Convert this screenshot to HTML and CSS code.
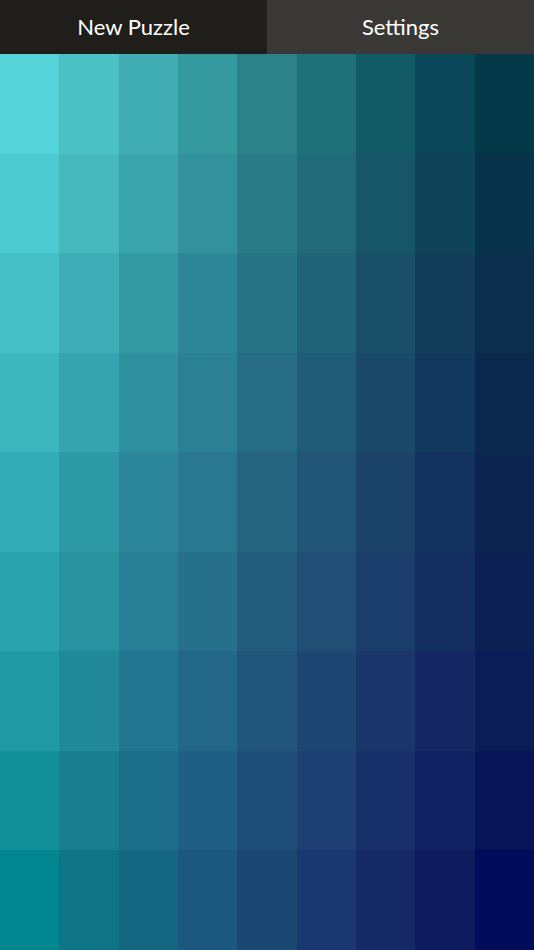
FILE: index.html
```html
<!DOCTYPE html>
<html>
<head>
<meta charset="utf-8">
<link rel="stylesheet" href="styles.css">
</head>
<body>
<div class="app">
  <div class="tabs">
    <div class="tab tab-new">New Puzzle</div>
    <div class="tab tab-settings">Settings</div>
  </div>
  <div class="grid">
    <div class="cell" style="background:rgb(85,212,218)"></div>
    <div class="cell" style="background:rgb(75,192,197)"></div>
    <div class="cell" style="background:rgb(64,173,179)"></div>
    <div class="cell" style="background:rgb(53,154,158)"></div>
    <div class="cell" style="background:rgb(43,130,137)"></div>
    <div class="cell" style="background:rgb(31,112,121)"></div>
    <div class="cell" style="background:rgb(19,90,103)"></div>
    <div class="cell" style="background:rgb(9,70,87)"></div>
    <div class="cell" style="background:rgb(3,56,72)"></div>

    <div class="cell" style="background:rgb(77,202,208)"></div>
    <div class="cell" style="background:rgb(69,183,189)"></div>
    <div class="cell" style="background:rgb(58,164,171)"></div>
    <div class="cell" style="background:rgb(50,145,155)"></div>
    <div class="cell" style="background:rgb(41,123,135)"></div>
    <div class="cell" style="background:rgb(32,106,121)"></div>
    <div class="cell" style="background:rgb(23,85,104)"></div>
    <div class="cell" style="background:rgb(14,66,89)"></div>
    <div class="cell" style="background:rgb(7,51,74)"></div>

    <div class="cell" style="background:rgb(69,192,198)"></div>
    <div class="cell" style="background:rgb(62,173,181)"></div>
    <div class="cell" style="background:rgb(51,154,162)"></div>
    <div class="cell" style="background:rgb(46,135,151)"></div>
    <div class="cell" style="background:rgb(39,116,132)"></div>
    <div class="cell" style="background:rgb(33,99,121)"></div>
    <div class="cell" style="background:rgb(26,79,105)"></div>
    <div class="cell" style="background:rgb(18,61,91)"></div>
    <div class="cell" style="background:rgb(10,46,76)"></div>

    <div class="cell" style="background:rgb(60,183,190)"></div>
    <div class="cell" style="background:rgb(54,164,174)"></div>
    <div class="cell" style="background:rgb(47,145,158)"></div>
    <div class="cell" style="background:rgb(44,128,147)"></div>
    <div class="cell" style="background:rgb(38,108,130)"></div>
    <div class="cell" style="background:rgb(33,92,119)"></div>
    <div class="cell" style="background:rgb(27,73,106)"></div>
    <div class="cell" style="background:rgb(19,56,93)"></div>
    <div class="cell" style="background:rgb(11,41,78)"></div>

    <div class="cell" style="background:rgb(51,173,181)"></div>
    <div class="cell" style="background:rgb(45,154,166)"></div>
    <div class="cell" style="background:rgb(43,135,153)"></div>
    <div class="cell" style="background:rgb(42,120,143)"></div>
    <div class="cell" style="background:rgb(37,99,127)"></div>
    <div class="cell" style="background:rgb(33,85,117)"></div>
    <div class="cell" style="background:rgb(27,67,106)"></div>
    <div class="cell" style="background:rgb(20,50,95)"></div>
    <div class="cell" style="background:rgb(12,36,80)"></div>

    <div class="cell" style="background:rgb(41,164,173)"></div>
    <div class="cell" style="background:rgb(40,146,159)"></div>
    <div class="cell" style="background:rgb(39,127,149)"></div>
    <div class="cell" style="background:rgb(38,112,139)"></div>
    <div class="cell" style="background:rgb(35,92,125)"></div>
    <div class="cell" style="background:rgb(32,78,116)"></div>
    <div class="cell" style="background:rgb(27,61,107)"></div>
    <div class="cell" style="background:rgb(20,45,97)"></div>
    <div class="cell" style="background:rgb(12,32,83)"></div>

    <div class="cell" style="background:rgb(31,154,165)"></div>
    <div class="cell" style="background:rgb(34,137,152)"></div>
    <div class="cell" style="background:rgb(35,118,145)"></div>
    <div class="cell" style="background:rgb(34,103,135)"></div>
    <div class="cell" style="background:rgb(33,85,122)"></div>
    <div class="cell" style="background:rgb(30,70,115)"></div>
    <div class="cell" style="background:rgb(26,54,107)"></div>
    <div class="cell" style="background:rgb(20,39,98)"></div>
    <div class="cell" style="background:rgb(12,28,86)"></div>

    <div class="cell" style="background:rgb(17,144,154)"></div>
    <div class="cell" style="background:rgb(25,127,143)"></div>
    <div class="cell" style="background:rgb(28,110,137)"></div>
    <div class="cell" style="background:rgb(31,95,132)"></div>
    <div class="cell" style="background:rgb(30,78,119)"></div>
    <div class="cell" style="background:rgb(29,63,115)"></div>
    <div class="cell" style="background:rgb(24,48,105)"></div>
    <div class="cell" style="background:rgb(18,33,97)"></div>
    <div class="cell" style="background:rgb(7,20,88)"></div>

    <div class="cell" style="background:rgb(2,134,143)"></div>
    <div class="cell" style="background:rgb(15,117,134)"></div>
    <div class="cell" style="background:rgb(21,102,128)"></div>
    <div class="cell" style="background:rgb(28,87,128)"></div>
    <div class="cell" style="background:rgb(27,71,115)"></div>
    <div class="cell" style="background:rgb(27,55,114)"></div>
    <div class="cell" style="background:rgb(21,41,102)"></div>
    <div class="cell" style="background:rgb(15,27,95)"></div>
    <div class="cell" style="background:rgb(2,12,90)"></div>
  </div>
</div>
</body>
</html>
```
FILE: styles.css
```css
html, body { margin: 0; padding: 0; }
body { width: 534px; height: 950px; overflow: hidden; background: #000; }
.app { display: flex; flex-direction: column; height: 950px; }
.tabs { display: flex; height: 54px; flex: none; }
.tab {
  flex: 1;
  display: flex; align-items: center; justify-content: center;
  color: #ffffff;
  font-family: Lato, "Open Sans", sans-serif;
  font-size: 22px;
  padding-bottom: 2px;
}
.tab-new { background: #201e1b; }
.tab-settings { background: #3a3835; }
.grid {
  flex: 1;
  display: grid;
  grid-template-columns: repeat(9, 1fr);
  grid-template-rows: repeat(9, 1fr);
}
```
